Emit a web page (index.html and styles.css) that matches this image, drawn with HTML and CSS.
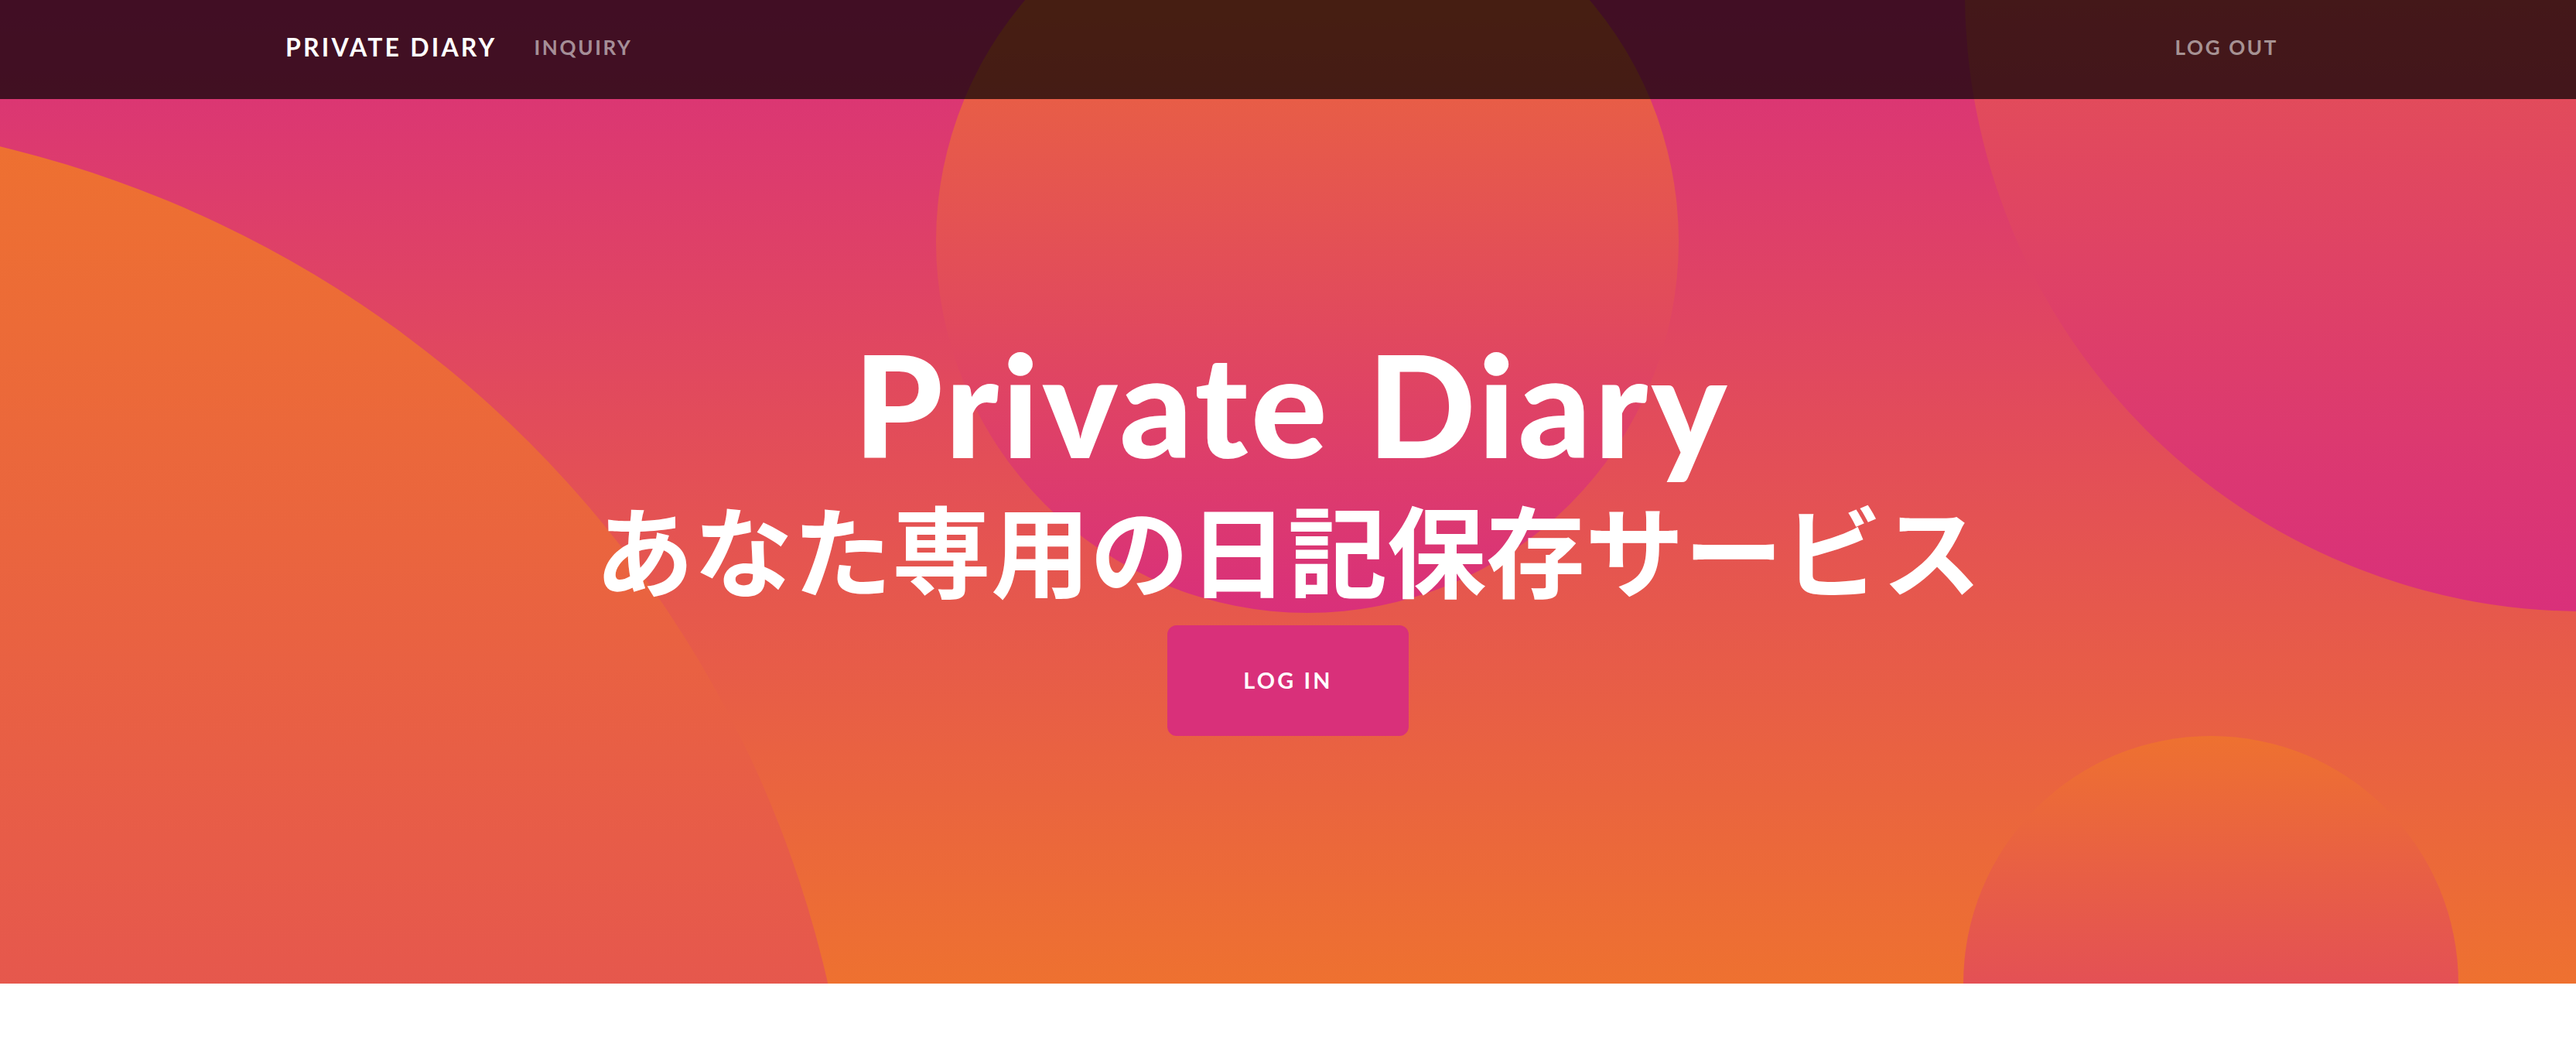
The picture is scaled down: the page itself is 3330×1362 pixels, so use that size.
FILE: index.html
```html
<!DOCTYPE html>
<html lang="ja">
<head>
<meta charset="utf-8">
<title>Private Diary</title>
<link rel="stylesheet" href="styles.css">
</head>
<body>
<nav class="navbar">
  <div class="nav-container">
    <a class="brand" href="#">Private Diary</a>
    <ul class="nav-list">
      <li><a class="nav-link" href="#">Inquiry</a></li>
    </ul>
    <ul class="nav-list nav-right">
      <li><a class="nav-link" href="#">Log Out</a></li>
    </ul>
  </div>
</nav>
<header class="masthead">
  <div class="bg-circle circle-1"></div>
  <div class="bg-circle circle-2"></div>
  <div class="bg-circle circle-3"></div>
  <div class="bg-circle circle-4"></div>
  <div class="masthead-content">
    <h1 class="masthead-heading">Private Diary</h1>
    <h2 class="masthead-subheading">あなた専用の日記保存サービス</h2>
    <a class="btn-xl" href="#">Log In</a>
  </div>
</header>
</body>
</html>
```
FILE: styles.css
```css
html, body {
  margin: 0;
  padding: 0;
}
body {
  background: #fff;
  font-family: Lato, "Noto Sans CJK JP", sans-serif;
  color: #212529;
}
a {
  text-decoration: none;
}

/* navbar */
.navbar {
  position: absolute;
  top: 0;
  left: 0;
  right: 0;
  z-index: 10;
  height: 128px;
  box-sizing: border-box;
  padding: 27px 0 33px;
  background-color: rgba(0, 0, 0, 0.7);
}
.nav-container {
  width: 2640px;
  margin: 0 auto;
  padding: 0 24px;
  box-sizing: border-box;
  display: flex;
  align-items: flex-start;
}
.brand {
  display: inline-block;
  padding: 10px 0;
  margin-right: 32px;
  font-family: Lato, sans-serif;
  font-size: 32px;
  line-height: 48px;
  font-weight: 700;
  letter-spacing: 3.2px;
  text-transform: uppercase;
  color: #fff;
}
.nav-list {
  display: flex;
  list-style: none;
  margin: 0;
  padding: 0;
}
.nav-right {
  margin-left: auto;
}
.nav-link {
  display: block;
  padding: 15px 16px 16px;
  font-family: Lato, sans-serif;
  font-size: 26px;
  line-height: 38px;
  font-weight: 700;
  letter-spacing: 2.65px;
  text-transform: uppercase;
  color: rgba(255, 255, 255, 0.55);
}

/* masthead */
.masthead {
  position: relative;
  overflow: hidden;
  height: 1271px;
  box-sizing: border-box;
  padding-top: 411px;
  padding-bottom: 320px;
  text-align: center;
  background: linear-gradient(0deg, #ee7130 0%, #d9307a 100%);
}
.bg-circle {
  position: absolute;
  z-index: 0;
  border-radius: 100%;
  background: linear-gradient(0deg, #d9307a 0%, #ee7130 100%);
}
.circle-1 {
  width: 2880px;
  height: 2880px;
  left: -1774px;
  top: 150px;
}
.circle-2 {
  width: 1600px;
  height: 1600px;
  left: 2540px;
  top: -810px;
}
.circle-3 {
  width: 640px;
  height: 640px;
  left: 2538px;
  top: 951px;
}
.circle-4 {
  width: 960px;
  height: 960px;
  left: 1210px;
  top: -168px;
}
.masthead-content {
  position: relative;
  z-index: 1;
  display: flex;
  flex-direction: column;
  align-items: center;
}
.masthead-heading {
  margin: 0;
  padding-left: 10px;
  font-family: Lato, sans-serif;
  font-weight: 900;
  font-size: 184px;
  line-height: 220px;
  letter-spacing: 4.2px;
  color: #fff;
}
.masthead-subheading {
  margin: 0;
  font-family: "Noto Sans CJK JP", sans-serif;
  font-weight: 700;
  font-size: 128px;
  line-height: 154px;
  color: #fff;
}
.btn-xl {
  display: inline-block;
  margin-top: 23px;
  padding: 48px 96px;
  border: 2px solid #d9307a;
  border-radius: 12px;
  background-color: #d9307a;
  font-family: Lato, sans-serif;
  font-size: 28.8px;
  line-height: 43px;
  font-weight: 700;
  letter-spacing: 3.2px;
  text-transform: uppercase;
  color: #fff;
}
```
